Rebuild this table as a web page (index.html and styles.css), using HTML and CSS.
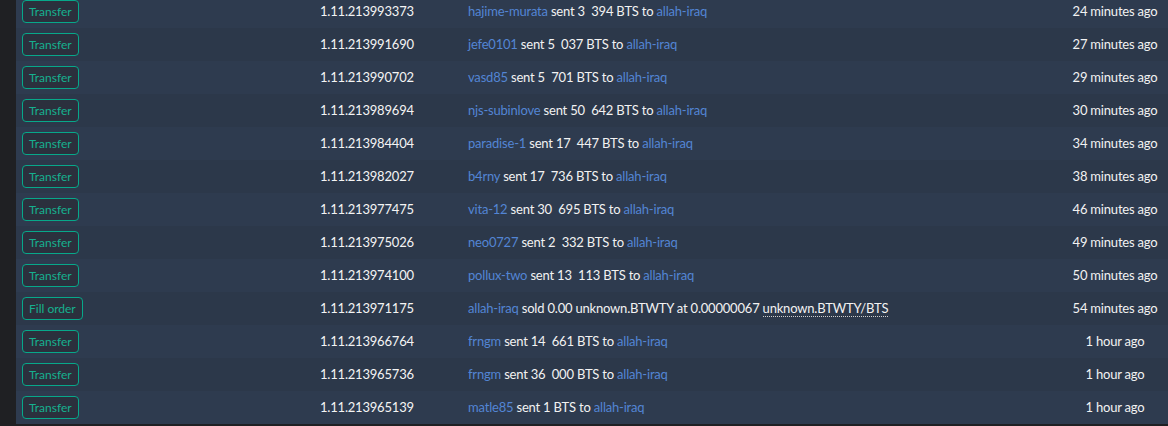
FILE: index.html
```html
<!DOCTYPE html>
<html>
<head>
<meta charset="utf-8">
<link rel="stylesheet" href="styles.css">
</head>
<body>
<div class="page">
  <div class="side"></div>
  <div class="table">
    <div class="row"><span class="badge">Transfer</span><span class="id">1.11.213993373</span><span class="desc"><a>hajime-murata</a> sent 3&ensp;394 BTS to <a>allah-iraq</a></span><span class="time">24 minutes ago</span></div>
    <div class="row"><span class="badge">Transfer</span><span class="id">1.11.213991690</span><span class="desc"><a>jefe0101</a> sent 5&ensp;037 BTS to <a>allah-iraq</a></span><span class="time">27 minutes ago</span></div>
    <div class="row"><span class="badge">Transfer</span><span class="id">1.11.213990702</span><span class="desc"><a>vasd85</a> sent 5&ensp;701 BTS to <a>allah-iraq</a></span><span class="time">29 minutes ago</span></div>
    <div class="row"><span class="badge">Transfer</span><span class="id">1.11.213989694</span><span class="desc"><a>njs-subinlove</a> sent 50&ensp;642 BTS to <a>allah-iraq</a></span><span class="time">30 minutes ago</span></div>
    <div class="row"><span class="badge">Transfer</span><span class="id">1.11.213984404</span><span class="desc"><a>paradise-1</a> sent 17&ensp;447 BTS to <a>allah-iraq</a></span><span class="time">34 minutes ago</span></div>
    <div class="row"><span class="badge">Transfer</span><span class="id">1.11.213982027</span><span class="desc"><a>b4rny</a> sent 17&ensp;736 BTS to <a>allah-iraq</a></span><span class="time">38 minutes ago</span></div>
    <div class="row"><span class="badge">Transfer</span><span class="id">1.11.213977475</span><span class="desc"><a>vita-12</a> sent 30&ensp;695 BTS to <a>allah-iraq</a></span><span class="time">46 minutes ago</span></div>
    <div class="row"><span class="badge">Transfer</span><span class="id">1.11.213975026</span><span class="desc"><a>neo0727</a> sent 2&ensp;332 BTS to <a>allah-iraq</a></span><span class="time">49 minutes ago</span></div>
    <div class="row"><span class="badge">Transfer</span><span class="id">1.11.213974100</span><span class="desc"><a>pollux-two</a> sent 13&ensp;113 BTS to <a>allah-iraq</a></span><span class="time">50 minutes ago</span></div>
    <div class="row"><span class="badge">Fill order</span><span class="id">1.11.213971175</span><span class="desc"><a>allah-iraq</a> sold 0.00 unknown.BTWTY at 0.00000067 <span class="dotted">unknown.BTWTY/BTS</span></span><span class="time">54 minutes ago</span></div>
    <div class="row"><span class="badge">Transfer</span><span class="id">1.11.213966764</span><span class="desc"><a>frngm</a> sent 14&ensp;661 BTS to <a>allah-iraq</a></span><span class="time">1 hour ago</span></div>
    <div class="row"><span class="badge">Transfer</span><span class="id">1.11.213965736</span><span class="desc"><a>frngm</a> sent 36&ensp;000 BTS to <a>allah-iraq</a></span><span class="time">1 hour ago</span></div>
    <div class="row"><span class="badge">Transfer</span><span class="id">1.11.213965139</span><span class="desc"><a>matle85</a> sent 1 BTS to <a>allah-iraq</a></span><span class="time">1 hour ago</span></div>
  </div>
</div>
</body>
</html>
```
FILE: styles.css
```css
html, body {
  margin: 0;
  padding: 0;
  background: #1f2023;
  height: 426px;
  overflow: hidden;
}
body {
  font-family: Lato, "Liberation Sans", sans-serif;
  color: #f2f2f2;
}
.page {
  display: flex;
}
.side {
  width: 16px;
  flex: none;
}
.table {
  flex: 1;
  margin-top: -5px;
}
.row {
  display: grid;
  grid-template-columns: 298px 148px 1fr 86px;
  align-items: center;
  height: 33px;
  padding: 0 10px 0 6px;
  background: #2e3b4f;
  font-size: 13px;
  letter-spacing: -0.2px;
}
.row:nth-child(even) {
  background: #2c384a;
}
.row > span:not(.badge) {
  padding-bottom: 2px;
}
.badge {
  justify-self: start;
  box-sizing: border-box;
  height: 23px;
  line-height: 21px;
  padding: 0 6px;
  border: 1px solid #07a88a;
  border-radius: 4px;
  background: #2b303d;
  color: #16b08f;
  font-size: 12px;
  letter-spacing: 0;
}
.id {
  color: #f4f4f4;
}
.desc a {
  color: #5385d4;
}
.dotted {
  border-bottom: 1px dotted #d0d0d0;
}
.time {
  text-align: center;
  white-space: nowrap;
}
```
